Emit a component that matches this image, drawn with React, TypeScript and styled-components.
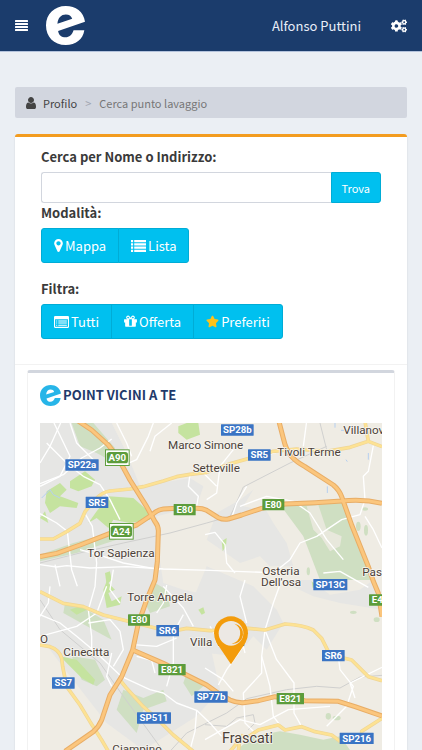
import React from "react";
import styled, { createGlobalStyle } from "styled-components";
import { FaCogs, FaStar } from "react-icons/fa";

const GlobalStyle = createGlobalStyle`
  *, *::before, *::after { box-sizing: border-box; }
  body {
    margin: 0;
    background: #ebeff4;
    color: #333;
    font-family: "Noto Sans CJK JP", "Noto Sans", sans-serif;
    font-size: 13px;
    line-height: 20px;
  }
  button, input { font: inherit; }
`;

const Page = styled.div`
  display: flex;
  flex-direction: column;
  height: 100vh;
  min-height: 750px;
  overflow: hidden;
`;

const Header = styled.header`
  display: flex;
  align-items: center;
  flex: none;
  height: 52px;
  padding: 0 15px;
  background: #1b3c6c;
  border-bottom: 1px solid #b4c3dc;
  color: #fff;
`;

const IconButton = styled.button`
  display: flex;
  padding: 0;
  border: 0;
  background: none;
  color: inherit;
  cursor: pointer;
`;

const Brand = styled.a`
  display: flex;
  margin-left: 18px;
  color: #fff;
`;

const UserLink = styled.a`
  margin-left: auto;
  margin-right: 30px;
  color: #e8eef8;
  text-decoration: none;
`;

const Breadcrumb = styled.nav`
  display: flex;
  align-items: center;
  flex: none;
  height: 31px;
  margin: 35px 15px 16px;
  padding: 0 11px;
  border-radius: 2px;
  background: #d2d6df;
  color: #777;
  font-size: 11px;
`;

const Crumb = styled.a`
  display: flex;
  align-items: center;
  gap: 7px;
  color: #444;
  text-decoration: none;
`;

const Separator = styled.span`
  margin: 0 8px;
  color: #a0a5b0;
`;

const Card = styled.main`
  display: flex;
  flex: 1;
  flex-direction: column;
  min-height: 0;
  margin: 0 15px;
  border-top: 3px solid #f39c1f;
  border-radius: 3px 3px 0 0;
  background: #fff;
  box-shadow: 0 1px 2px rgba(0, 0, 0, 0.12);
`;

const Filters = styled.div`
  flex: none;
  padding: 10px 26px 25px;
  border-bottom: 1px solid #f2f2f2;
`;

const Caption = styled.label`
  display: block;
  margin-bottom: 5px;
  color: #3a3a3a;
  font-weight: 700;
`;

const SearchRow = styled.form`
  display: flex;
  height: 31px;
`;

const SearchInput = styled.input`
  flex: 1;
  min-width: 0;
  padding: 0 10px;
  border: 1px solid #d2d6de;
  border-right: 0;
  border-radius: 3px 0 0 3px;
  background: #fff;
  outline: none;
`;

const SearchButton = styled.button`
  padding: 0 10px;
  border: 1px solid #00acd6;
  border-radius: 0 3px 3px 0;
  background: #00c0ef;
  color: #fff;
  font-size: 11px;
  cursor: pointer;
`;

const Group = styled.fieldset<{ $gap: number }>`
  margin: 0 0 ${(p) => p.$gap}px;
  padding: 0;
  border: 0;
`;

const Legend = styled.legend`
  display: block;
  margin-bottom: 5px;
  padding: 0;
  color: #3a3a3a;
  font-weight: 700;
`;

const ButtonBar = styled.div`
  display: flex;
`;

const GroupButton = styled.button`
  display: flex;
  align-items: center;
  gap: 2px;
  height: 35px;
  padding: 0 12px;
  border: 1px solid #00acd6;
  background: #00c0ef;
  color: #fff;
  cursor: pointer;
  & + & { margin-left: -1px; }
  &:first-child { border-radius: 3px 0 0 3px; }
  &:last-child { border-radius: 0 3px 3px 0; }
`;

const Panel = styled.section`
  display: flex;
  flex: 1;
  flex-direction: column;
  min-height: 0;
  margin: 5px 12px 0;
  padding: 0 12px;
  border: 1px solid #f2f2f2;
  border-top: 3px solid #d2d6de;
  border-bottom: 0;
  border-radius: 3px 3px 0 0;
`;

const PanelTitle = styled.h3`
  display: flex;
  align-items: center;
  gap: 2px;
  height: 50px;
  margin: 0;
  padding-bottom: 6px;
  color: #1f3a6b;
  font-size: 13px;
  font-weight: 700;
`;

const MapArea = styled.div`
  flex: 1;
  min-height: 0;
  overflow: hidden;
  background: #efece4;
`;

const MapSvg = styled.svg`
  display: block;
  width: 100%;
  height: 100%;
  font-family: Roboto, sans-serif;
`;

const Logo = ({ size, color }: { size: number; color: string }) => (
  <svg width={size} height={size} viewBox="0 0 116 116" aria-hidden="true">
    <path
      fill={color}
      fillRule="evenodd"
      d="M59 0C88 0 112 17 116 47L36 74C38 87 46 93 58 93C69 93 78 85 82 72L114 72C110 99 88 116 59 116C23 116 0 91 0 57C0 24 25 0 59 0ZM34 53L78 38C75 29 69 25 59 25C45 25 35 35 34 53Z"
    />
  </svg>
);

const MenuIcon = () => (
  <svg width="13" height="11" viewBox="0 0 13 11" fill="currentColor" aria-hidden="true">
    {[0, 3, 6, 9].map((y) => (
      <rect key={y} y={y} width="13" height="2" rx="0.5" />
    ))}
  </svg>
);

const UserIcon = () => (
  <svg width="10" height="12" viewBox="0 128 1280 1536" fill="currentColor" aria-hidden="true">
    <path d="M1280 1399q0 109-62.500 187t-150.500 78h-854q-88 0-150.500-78t-62.500-187q0-85 8.500-160.500t31.500-152 58.500-131 94-89 134.500-34.500q131 128 313 128t313-128q76 0 134.500 34.500t94 89 58.500 131 31.500 152 8.500 160.500zm-256-887q0 159-112.500 271.500t-271.500 112.500-271.500-112.500-112.500-271.500 112.500-271.500 271.500-112.500 271.500 112.500 112.500 271.500z" />
  </svg>
);

const MarkerIcon = () => (
  <svg width="9" height="13" viewBox="0 128 1024 1536" fill="currentColor" aria-hidden="true">
    <path d="M768 640q0-106-75-181t-181-75-181 75-75 181 75 181 181 75 181-75 75-181zm256 0q0 109-33 179l-364 774q-16 33-47.500 52t-67.500 19-67.500-19-46.500-52l-365-774q-33-70-33-179 0-212 150-362t362-150 362 150 150 362z" />
  </svg>
);

const ListIcon = () => (
  <svg width="15" height="12" viewBox="0 0 14 11" fill="currentColor" aria-hidden="true">
    {[0, 3, 6, 9].map((y) => (
      <path key={y} d={`M0 ${y}h2v2H0zM3 ${y}h11v2H3z`} />
    ))}
  </svg>
);

const ListAltIcon = () => (
  <svg width="15" height="12" viewBox="0 0 28 22" fill="currentColor" aria-hidden="true">
    <path
      fillRule="evenodd"
      d="M2 0H26Q28 0 28 2V20Q28 22 26 22H2Q0 22 0 20V2Q0 0 2 0ZM2 6V20H26V6ZM4 8h2v2H4zM8 8h16v2H8zM4 12h2v2H4zM8 12h16v2H8zM4 16h2v2H4zM8 16h16v2H8z"
    />
  </svg>
);

const GiftIcon = () => (
  <svg width="13" height="15" viewBox="0 0 1536 1792" fill="currentColor" aria-hidden="true">
    <path d="M928 1356v-56-468-192h-320v192 468 56q0 25 18 38.500t46 13.500h192q28 0 46-13.500t18-38.500zm-456-844h195l-126-161q-26-31-69-31-40 0-68 28t-28 68 28 68 68 28zm688-96q0-40-28-68t-68-28q-43 0-69 31l-125 161h194q40 0 68-28t28-68zm376 256v320q0 14-9 23t-23 9h-96v416q0 40-28 68t-68 28h-1088q-40 0-68-28t-28-68v-416h-96q-14 0-23-9t-9-23v-320q0-14 9-23t23-9h440q-93 0-158.500-65.500t-65.500-158.500 65.500-158.500 158.500-65.500q107 0 168 77l128 165 128-165q61-77 168-77 93 0 158.500 65.500t65.500 158.500-65.500 158.500-158.500 65.500h440q14 0 23 9t9 23z" />
  </svg>
);

const MOTORWAYS = [
  "M0 401L50 391L120 366L210 331L290 306L335 276Q352 260 370 258L410 256H470Q488 256 500 262L535 284Q550 291 565 288L605 276L665 256L735 243L825 239L905 234Q970 227 1026 241",
  "M110 -9L155 21L205 66L232 101L270 171L320 251L345 296Q356 310 355 326L352 416L345 471L320 531L295 601L278 681L245 761L210 816L185 891Q176 912 160 926L75 985",
  "M717 -4L730 46Q738 82 755 101Q768 116 795 131L880 186Q897 200 905 221L935 306L985 431L1000 475L1015 511L1026 581",
  "M278 681L370 721L440 756L500 786L535 811L570 831Q590 840 610 839L655 833L705 821L795 833L895 835L945 851L1026 879",
];

const MAIN_ROADS = [
  "M0 348H40L80 326L120 301L135 266L165 231Q185 207 210 204L270 198L310 191L370 174L410 161L450 154L500 148L575 121L650 100L700 85L770 78L860 85L930 73L985 55L1026 71M985 55L975 -5",
  "M0 506L70 541L130 551L190 576L250 591L310 606L390 626L440 616L510 623L625 616L675 621L735 603Q790 606 820 621L845 646L865 686L895 701L935 711L985 761L1026 773",
  "M0 666L30 671Q58 680 65 706L68 731L80 791L120 846L150 896L185 951L205 985",
  "M240 771L260 796L310 851L355 891L400 936L460 985",
  "M595 985L600 945L625 941L655 921L715 906L735 921L785 911L825 926L875 936L900 955L965 945L965 925L1026 886M570 985L595 956L610 935",
];

const STREETS = [
  "M0 272L50 300L82 325L95 440L112 490",
  "M133 268L157 310L170 420L165 491L145 561L155 640L155 690",
  "M0 425L50 432L80 428L150 435L260 431L370 438L510 442L720 450",
  "M0 182L70 155L125 105L180 75L215 48",
  "M0 120L30 70L62 0M20 60L90 130L130 160L180 185L210 230L240 290",
  "M90 0L110 60L160 110M42 0L90 100L60 160L0 190",
  "M340 0L325 40L290 110L255 125",
  "M230 0L260 60L275 100M395 0L345 40L330 85",
  "M0 575L60 600L110 640L170 690L245 761L330 800L370 810L410 840L470 862L510 900L545 940",
  "M30 490L25 540L0 580M145 600L210 590L240 625L250 680L220 730",
  "M380 486L370 540L350 570M370 490L430 555L460 610",
  "M430 575L400 630L400 720L380 790M280 665L350 670L410 645",
  "M290 700L335 712L345 750M215 790L200 760L215 690",
  "M470 862L465 925L450 981M510 610L540 660L580 690",
  "M535 786L560 740L610 670L615 690M575 285L590 240L620 190",
  "M495 335L525 328L555 365L560 420L585 450",
  "M450 154L445 190L475 220L470 250M500 230L530 210L540 130L580 80",
  "M800 -5L790 70M720 85L630 110M1000 68L985 145L970 160L975 230L960 275L905 290L830 340L780 360L750 410L700 450",
  "M850 450L900 445L985 493M725 471L700 540L675 621L665 700L690 790L700 880L720 906",
  "M615 471L600 520L620 600M675 621L710 710L762 780L762 870L785 911",
  "M895 701L900 740L940 790L920 850L860 910M945 825L930 780L1026 733",
  "M665 700L665 750L610 810L615 900L640 925M495 735L550 770L580 805",
  "M495 950L600 890L660 905L745 860L870 850",
  "M600 250L680 220L760 235L810 270L860 350L910 410",
  "M975 280L1000 320L1026 375M530 190L490 150",
  "M0 640L110 610L170 570L200 490M45 425L60 490",
  "M120 380L190 400L250 420L360 440M220 440L210 500L240 540",
];

const RAILS = [
  "M0 420L140 385L250 360L390 330L500 300L570 280L580 260L610 192L750 120L860 70",
  "M0 530L60 620L180 720L250 820L330 930L370 985",
  "M390 985L440 930L560 870L620 827L740 800L830 790L900 795L960 762L1026 757",
  "M495 905L560 910L590 885L640 875L645 900L625 920",
  "M840 0L860 80",
];

const TOWNS: Array<[string, number, number, number?]> = [
  ["Marco Simone", 384, 78],
  ["Setteville", 458, 148],
  ["Tivoli Terme", 712, 98],
  ["Villanova", 910, 33],
  ["Tor Sapienza", 142, 403],
  ["Torre Angela", 262, 533],
  ["Cinecitta", 70, 699],
  ["O", 0, 660],
  ["Villa Verde", 450, 668],
  ["Osteria", 667, 456],
  ["Dell'osa", 663, 490],
  ["Passo", 967, 459],
  ["Frascati", 546, 959, 43],
  ["Ciampino", 217, 991],
];

type Shield = [string, number, number, number, "sp" | "e" | "a"];

const SHIELDS: Shield[] = [
  ["A90", 232, 104, 64, "a"],
  ["SP22a", 126, 126, 100, "sp"],
  ["SR5", 171, 238, 68, "sp"],
  ["E80", 434, 260, 66, "e"],
  ["A24", 244, 325, 64, "a"],
  ["SP28b", 592, 21, 98, "sp"],
  ["SR5", 658, 96, 68, "sp"],
  ["E80", 700, 245, 66, "e"],
  ["SP13C", 871, 485, 102, "sp"],
  ["E45", 1020, 531, 66, "e"],
  ["E80", 297, 591, 66, "e"],
  ["SR6", 383, 623, 68, "sp"],
  ["E821", 396, 740, 82, "e"],
  ["SS7", 70, 780, 68, "sp"],
  ["SP77b", 513, 822, 100, "sp"],
  ["SR6", 880, 698, 68, "sp"],
  ["E821", 751, 827, 82, "e"],
  ["SP511", 342, 885, 102, "sp"],
  ["SP216", 950, 946, 102, "sp"],
];

const RoadShield = ({ data: [name, x, y, w, kind] }: { data: Shield }) => (
  <g>
    {kind === "a" && (
      <>
        <rect x={x - 37} y={y - 25} width={74} height={50} fill="#61a040" />
        <rect x={x - 34} y={y - 22} width={68} height={44} fill="#fff" />
      </>
    )}
    <rect
      x={x - w / 2}
      y={y - 17}
      width={w}
      height={34}
      rx={kind === "a" ? 8 : 1}
      fill={kind === "sp" ? "#3a74c4" : "#5c9c3c"}
    />
    <text x={x} y={y + 10} textAnchor="middle" fontSize={29} fontWeight={700} fill="#fff">
      {name}
    </text>
  </g>
);

const StreetMap = () => (
  <MapSvg
    viewBox="0 0 1026 981"
    preserveAspectRatio="xMidYMin slice"
    role="img"
    aria-label="Mappa dei punti di lavaggio"
  >
    <rect width="1026" height="981" fill="#efece4" />
    <g fill="#e6e6e4">
      <path d="M0 0H215L260 90L300 190L450 165L490 190L470 250L350 280L355 380L370 480L430 500L520 520L500 620L540 800L470 880L310 981L200 900L60 720L0 640Z" />
      <path d="M530 270L600 230L640 200L610 250L680 265L700 300L740 360L760 430L690 430L660 400L600 420L500 350Z" />
      <path d="M500 430L640 490L710 560L730 600L680 680L640 640L590 700L500 690L430 600Z" />
      <path d="M715 471L810 471L870 515L960 500L1000 471L1026 560L900 540L820 520Z" />
    </g>
    <path fill="#efece4" d="M0 760L60 800L180 960V981H0Z" />
    <g fill="#cfdfc2">
      <path d="M95 0H160L225 75L215 115L170 90L120 70Z" />
      <path d="M720 245L830 240L905 235L980 430L1000 471H840L790 340Z" />
      <path d="M0 395L100 360L210 330L230 350L110 390L0 415Z" />
      <path d="M345 480L380 500L390 550L330 570L315 540Z" />
      <path d="M75 540L140 560L190 590L215 650L160 620L70 570Z" />
      <path d="M250 800L310 825L370 800L380 835L310 860L290 930L230 860Z" />
      <path d="M590 981L640 940L720 925L780 935L850 950L900 940L930 981Z" />
      <path d="M95 700L165 710L195 770L170 790L125 770Z" />
      <path d="M440 750L490 790L455 820L430 780Z" />
    </g>
    <path fill="#e8e8dc" d="M800 250L835 246L860 320L905 340L900 370L870 385L845 345L820 320Z" />
    <g fill="#c5e39f">
      <path d="M415 10L440 0H475L480 35L440 50L415 30Z" />
      <path d="M90 175L135 145L165 170L155 190L115 205L90 195Z" />
      <path d="M20 205L60 180L80 200L60 220L115 240L110 255L60 250L30 270L15 240Z" />
      <path d="M205 220L280 225L325 265L330 290L270 300L220 290L205 315L170 285L145 300L170 265Z" />
      <path d="M0 285L15 265L25 300Z" />
      <path d="M545 355L560 345L558 370L548 385Z" />
      <path d="M200 475L225 500L205 510L215 535L245 520L240 545L200 555L190 500Z" />
      <path d="M90 560L130 545L140 560L110 575Z" />
      <path d="M60 700L110 710L165 770L160 785L125 765Z" />
      <path d="M195 450L210 445L215 470L200 485Z" />
      <path d="M475 560L490 553L495 570L485 575Z" />
      <path d="M815 475L830 490L818 495Z" />
    </g>
    <g fill="#cfdfc2">
      <ellipse cx="955" cy="310" rx="7" ry="14" />
      <ellipse cx="978" cy="322" rx="6" ry="16" />
      <ellipse cx="975" cy="258" rx="9" ry="5" />
      <ellipse cx="1010" cy="590" rx="9" ry="7" />
      <ellipse cx="940" cy="568" rx="10" ry="5" />
      <ellipse cx="890" cy="885" rx="12" ry="7" />
      <ellipse cx="865" cy="880" rx="8" ry="10" />
      <ellipse cx="800" cy="335" rx="9" ry="14" />
      <ellipse cx="805" cy="445" rx="5" ry="12" />
    </g>
    <g fill="none" stroke="#b5cff0" strokeWidth="3">
      <path d="M5 225L30 200L40 215L60 225M862 190V210M985 90V110M918 110L922 116M885 0V14M903 22H912" />
    </g>
    <g fill="none" stroke="#d0d0cf" strokeWidth="3">
      {RAILS.map((d) => <path key={d} d={d} />)}
    </g>
    <g fill="none" stroke="#fff" strokeWidth="4" strokeLinejoin="round">
      {STREETS.map((d) => <path key={d} d={d} />)}
    </g>
    <g fill="none" strokeLinejoin="round">
      {MAIN_ROADS.map((d) => <path key={d} d={d} stroke="#efd595" strokeWidth="11" />)}
      {MAIN_ROADS.map((d) => <path key={d + "i"} d={d} stroke="#fde293" strokeWidth="7" />)}
      {MOTORWAYS.map((d) => <path key={d} d={d} stroke="#e8ad66" strokeWidth="15" />)}
      {MOTORWAYS.map((d) => <path key={d + "i"} d={d} stroke="#fbc67d" strokeWidth="9" />)}
    </g>
    <g fill="#4b4139" stroke="#f7f5f0" strokeWidth="5" strokeLinejoin="round" paintOrder="stroke">
      {TOWNS.map(([name, x, y, size]) => (
        <text key={name} x={x} y={y} fontSize={size ?? 35}>{name}</text>
      ))}
    </g>
    {SHIELDS.map((s) => <RoadShield key={`${s[1]}-${s[2]}`} data={s} />)}
    <path fill="#f39c0c" d="M573 724L530 660Q522 645 522 631A51 51 0 0 1 624 631Q624 645 616 660Z" />
    <circle cx="573" cy="631" r="37" fill="#ece8e4" />
    <path fill="#f39c0c" d="M583 602A30 30 0 0 1 575 662A32 32 0 0 0 583 602Z" />
  </MapSvg>
);

export default function App() {
  return (
    <Page>
      <GlobalStyle />
      <Header>
        <IconButton type="button" aria-label="Menu"><MenuIcon /></IconButton>
        <Brand href="#" aria-label="Home"><Logo size={39} color="#fff" /></Brand>
        <UserLink href="#">Alfonso Puttini</UserLink>
        <IconButton type="button" aria-label="Impostazioni"><FaCogs size={16} /></IconButton>
      </Header>
      <Breadcrumb aria-label="Percorso">
        <Crumb href="#"><UserIcon />Profilo</Crumb>
        <Separator>&gt;</Separator>
        <span>Cerca punto lavaggio</span>
      </Breadcrumb>
      <Card>
        <Filters>
          <Caption htmlFor="search">Cerca per Nome o Indirizzo:</Caption>
          <SearchRow onSubmit={(e) => e.preventDefault()}>
            <SearchInput id="search" type="text" />
            <SearchButton type="submit">Trova</SearchButton>
          </SearchRow>
          <Group $gap={16}>
            <Legend>Modalità:</Legend>
            <ButtonBar>
              <GroupButton type="button"><MarkerIcon />Mappa</GroupButton>
              <GroupButton type="button"><ListIcon />Lista</GroupButton>
            </ButtonBar>
          </Group>
          <Group $gap={0}>
            <Legend>Filtra:</Legend>
            <ButtonBar>
              <GroupButton type="button"><ListAltIcon />Tutti</GroupButton>
              <GroupButton type="button"><GiftIcon />Offerta</GroupButton>
              <GroupButton type="button"><FaStar size={13} color="#fcc21b" />Preferiti</GroupButton>
            </ButtonBar>
          </Group>
        </Filters>
        <Panel>
          <PanelTitle><Logo size={21} color="#27b5e8" />POINT VICINI A TE</PanelTitle>
          <MapArea><StreetMap /></MapArea>
        </Panel>
      </Card>
    </Page>
  );
}
